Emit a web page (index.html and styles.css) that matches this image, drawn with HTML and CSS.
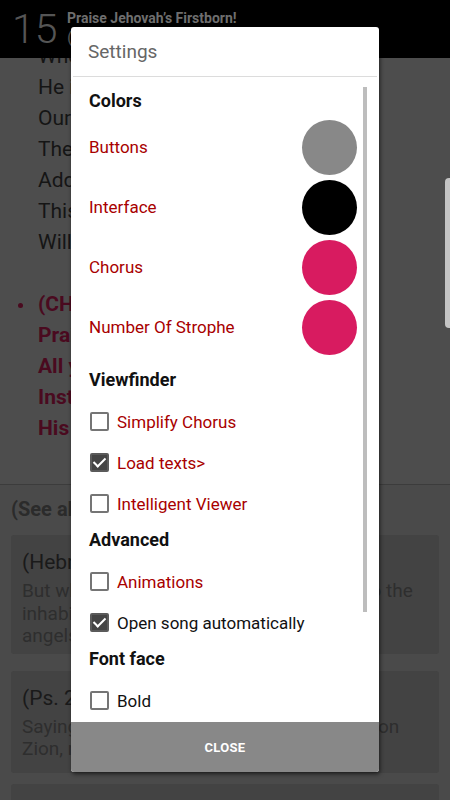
FILE: index.html
```html
<!DOCTYPE html>
<html>
<head>
  <meta charset="UTF-8">
  <title>Song 15</title>
  <link rel="stylesheet" href="styles.css">
</head>
<body>
  <div class="screen">
    <div class="header">
      <div class="num">15</div>
      <div class="head-text">
        <div class="song-title">Praise Jehovah’s Firstborn!</div>
        <div class="song-sub">(Hebrews 1:6)</div>
      </div>
    </div>

    <div class="lyrics">
      <div class="verse">
        <div>Who will come to meet him there?</div>
        <div>He is King of kings, the Lord;</div>
        <div>Our God has given him the throne.</div>
        <div>Then let all the nations bow;</div>
        <div>Add your voices to the song.</div>
        <div>This Son of God now rules alone;</div>
        <div>Will you praise him as you should?</div>
      </div>
      <div class="chorus">
        <div class="chorus-first">(CHORUS)</div>
        <div>Praise Jehovah’s Firstborn,</div>
        <div>All ye nations, sing.</div>
        <div>Installed upon Mount Zion,</div>
        <div>His reign has now begun.</div>
      </div>
    </div>

    <div class="refs">
      <div class="refs-title">(See also)</div>
      <div class="card">
        <div class="card-title">(Hebrews 1:6)</div>
        <div class="card-text">But when he again brings his Firstborn into the<br>inhabited earth, he says: “And let all God’s<br>angels do obeisance to him.”</div>
      </div>
      <div class="card card-short">
        <div class="card-title">(Ps. 2:6)</div>
        <div class="card-text">Saying: “I myself have installed my king upon<br>Zion, my holy mountain.”</div>
      </div>
      <div class="card">
        <div class="card-title">(Rev. 19:16)</div>
      </div>
    </div>

    <div class="side-tab"></div>

    <div class="dialog">
      <div class="dialog-title">Settings</div>
      <div class="dialog-body">
        <div class="scroll">
          <div class="group-title">Colors</div>
          <div class="colors">
            <div class="color-row"><span>Buttons</span><span class="swatch grey"></span></div>
            <div class="color-row"><span>Interface</span><span class="swatch black"></span></div>
            <div class="color-row"><span>Chorus</span><span class="swatch pink"></span></div>
            <div class="color-row"><span>Number Of Strophe</span><span class="swatch pink"></span></div>
          </div>

          <div class="group-title">Viewfinder</div>
          <div class="check-row red"><span class="box"></span>Simplify Chorus</div>
          <div class="check-row red"><span class="box on"></span>Load texts&gt;</div>
          <div class="check-row red"><span class="box"></span>Intelligent Viewer</div>

          <div class="group-title">Advanced</div>
          <div class="check-row red"><span class="box"></span>Animations</div>
          <div class="check-row"><span class="box on"></span>Open song automatically</div>

          <div class="group-title">Font face</div>
          <div class="check-row"><span class="box"></span>Bold</div>
          <div class="check-row"><span class="box"></span>Italic</div>
        </div>
        <div class="thumb"></div>
      </div>
      <div class="close">CLOSE</div>
    </div>
  </div>
</body>
</html>
```

FILE: styles.css
```css
html, body {
  margin: 0;
  padding: 0;
}

body {
  font-family: Roboto, "Noto Sans", sans-serif;
}

.screen {
  position: relative;
  width: 450px;
  height: 800px;
  overflow: hidden;
  background: #4d4d4d;
}

/* header */
.header {
  position: relative;
  z-index: 1;
  height: 58px;
  background: #000;
  display: flex;
  align-items: flex-start;
  overflow: hidden;
}

.num {
  font-size: 41px;
  font-weight: 300;
  color: #555;
  line-height: 58px;
  padding-left: 12px;
  width: 55px;
}

.head-text {
  padding-top: 9px;
}

.song-title {
  font-size: 14px;
  font-weight: bold;
  color: #6e6e6e;
  line-height: 18px;
}

.song-sub {
  font-size: 17px;
  color: #555;
  line-height: 20px;
}

/* lyrics */
.lyrics {
  margin-top: -17px;
  height: 443px;
  border-bottom: 1px solid #3c3c3c;
  font-size: 21px;
  line-height: 31px;
  white-space: nowrap;
}

.verse {
  padding-left: 38px;
  color: #151515;
}

.chorus {
  margin-top: 31px;
  padding-left: 38px;
  color: #4a0a1f;
  font-weight: bold;
}

.chorus-first {
  position: relative;
}

.chorus-first::before {
  content: "";
  position: absolute;
  left: -20px;
  top: 14px;
  width: 5px;
  height: 5px;
  border-radius: 50%;
  background: #4a0a1f;
}

/* references */
.refs {
  background: #4a4a4a;
  padding: 12px 11px 0 11px;
}

.refs-title {
  font-size: 20px;
  font-weight: bold;
  color: #2b2b2b;
  line-height: 24px;
  margin-bottom: 14px;
}

.card {
  background: #434343;
  border-radius: 3px;
  padding: 14px 11px 6px;
  margin-bottom: 17px;
  white-space: nowrap;
  overflow: hidden;
}

.card-short {
  padding-bottom: 12px;
  margin-bottom: 11px;
}

.card-title {
  font-size: 21px;
  line-height: 26px;
  color: #1a1a1a;
  margin-bottom: 5px;
}

.card-text {
  font-size: 19px;
  line-height: 22.5px;
  color: #2e2e2e;
}

.side-tab {
  position: absolute;
  right: -4px;
  top: 178px;
  width: 9px;
  height: 150px;
  border-radius: 4px 0 0 4px;
  background: #c4c4c4;
}

/* dialog */
.dialog {
  position: absolute;
  z-index: 3;
  left: 71px;
  top: 27px;
  width: 308px;
  height: 745px;
  background: #fff;
  border-radius: 3px;
  box-shadow: 1px 2px 4px rgba(0, 0, 0, 0.6);
  display: flex;
  flex-direction: column;
  overflow: hidden;
}

.dialog-title {
  height: 49px;
  line-height: 50px;
  font-size: 19px;
  color: #666;
  border-bottom: 1px solid #dcdcdc;
  margin: 0 2px;
  padding-left: 15px;
}

.dialog-body {
  position: relative;
  flex: 1;
  overflow: hidden;
}

.scroll {
  padding: 8px 22px 0 18px;
}

.thumb {
  position: absolute;
  right: 12px;
  top: 10px;
  width: 4px;
  height: 525px;
  background: #bdbdbd;
}

.group-title {
  font-size: 18px;
  font-weight: bold;
  color: #111;
  line-height: 24px;
  padding: 4px 0 9px;
}

.colors {
  margin: -5px 0 7px;
}

.color-row {
  height: 60px;
  display: flex;
  align-items: center;
  justify-content: space-between;
  font-size: 17px;
  color: #a80000;
}

.swatch {
  width: 55px;
  height: 55px;
  border-radius: 50%;
}

.grey { background: #888; }
.black { background: #000; }
.pink { background: #d81b60; }

.check-row {
  height: 41px;
  display: flex;
  align-items: center;
  gap: 8px;
  font-size: 17px;
  color: #111;
  padding-left: 1px;
}

.check-row.red {
  color: #a80000;
}

.box {
  box-sizing: border-box;
  width: 19px;
  height: 19px;
  border: 2px solid #757575;
  border-radius: 2px;
  position: relative;
}

.box.on {
  background: #444;
  border-color: #5a5a5a;
}

.box.on::after {
  content: "";
  position: absolute;
  left: 4px;
  top: 0px;
  width: 5px;
  height: 10px;
  border-right: 2px solid #fff;
  border-bottom: 2px solid #fff;
  transform: rotate(45deg);
}

.close {
  height: 50px;
  line-height: 52px;
  background: #888;
  color: #fff;
  text-align: center;
  font-size: 13px;
  font-weight: bold;
  letter-spacing: 0.3px;
}
```
